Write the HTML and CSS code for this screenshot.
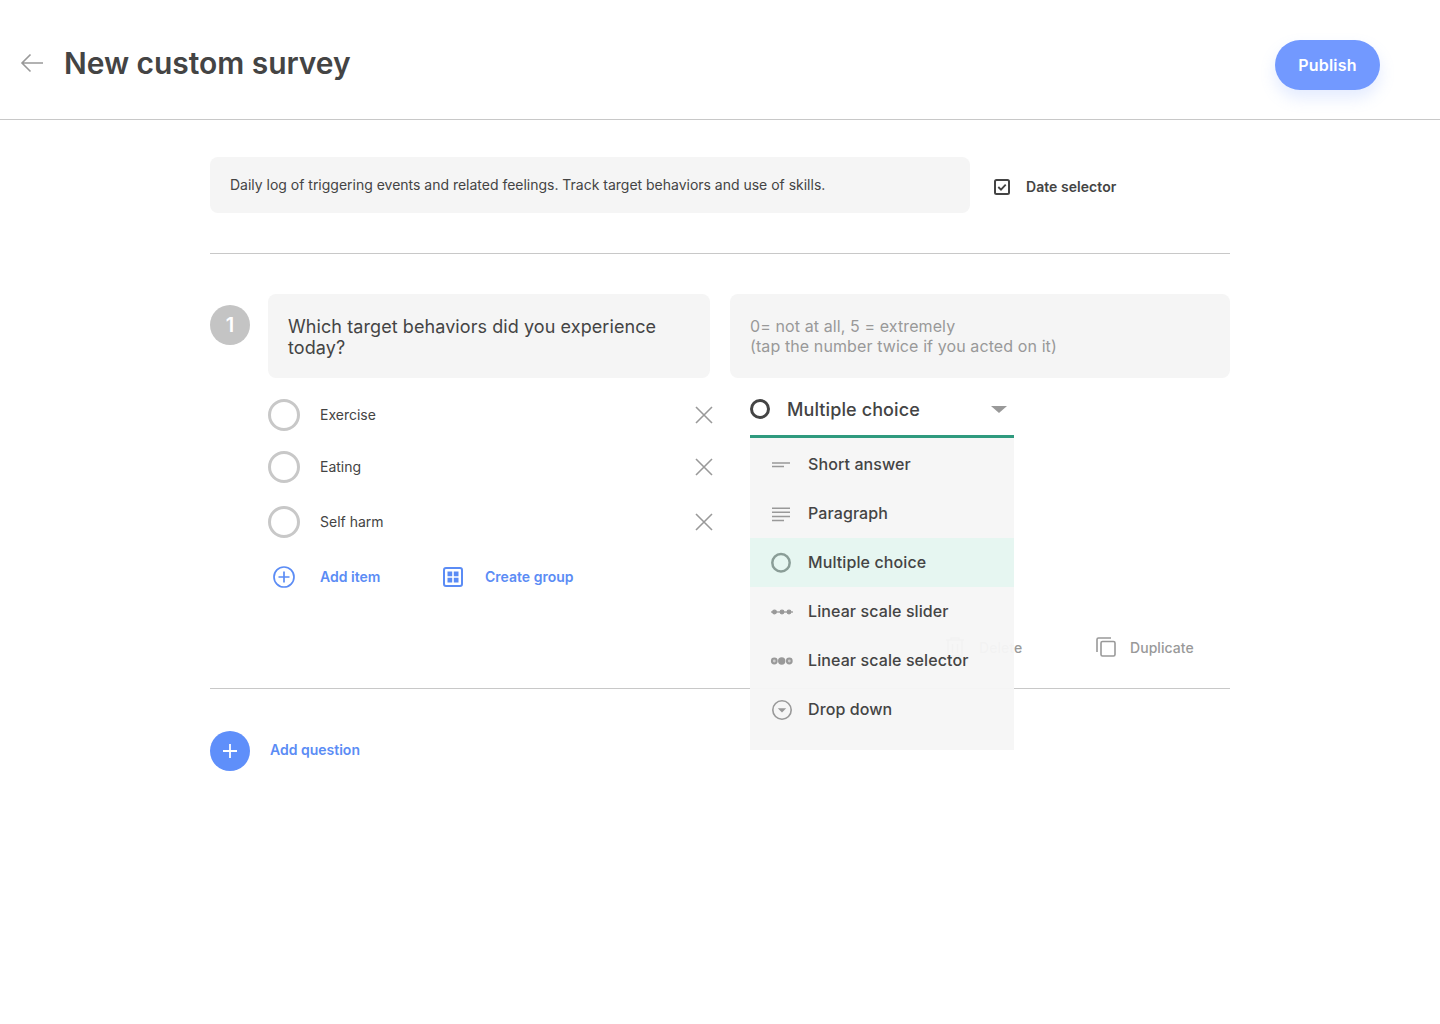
FILE: index.html
```html
<!DOCTYPE html>
<html lang="en">
<head>
<meta charset="utf-8">
<title>New custom survey</title>
<link rel="stylesheet" href="styles.css">
</head>
<body>
<header class="topbar">
  <div class="topbar-left">
    <svg class="back" width="24" height="20" viewBox="0 0 24 20" fill="none" stroke="#999" stroke-width="1.6"><path d="M23 10H2M10.500 1.500L2 10l8.500 8.500"/></svg>
    <h1 class="title">New custom survey</h1>
  </div>
  <button class="publish">Publish</button>
</header>
<main class="content">
  <section class="intro">
    <div class="intro-box">Daily log of triggering events and related feelings. Track target behaviors and use of skills.</div>
    <div class="date-select">
      <svg width="16" height="16" viewBox="0 0 16 16" fill="none" stroke="#444"><rect x="1" y="1" width="14" height="14" rx="1.500" stroke-width="2"/><path d="M4.300 8l2.700 2.700 4.700-5" stroke-width="1.800"/></svg>
      <span class="lift">Date selector</span>
    </div>
  </section>
  <section class="question">
    <div class="number">1</div>
    <div class="q-left">
      <div class="q-box">Which target behaviors did you experience today?</div>
      <ul class="options">
        <li class="option o1"><span class="radio"></span><span class="opt-label lift">Exercise</span><svg class="x" width="18" height="18" viewBox="0 0 18 18" stroke="#999" stroke-width="1.600"><path d="M1 1l16 16M17 1L1 17"/></svg></li>
        <li class="option o2"><span class="radio"></span><span class="opt-label lift">Eating</span><svg class="x" width="18" height="18" viewBox="0 0 18 18" stroke="#999" stroke-width="1.600"><path d="M1 1l16 16M17 1L1 17"/></svg></li>
        <li class="option o3"><span class="radio"></span><span class="opt-label lift">Self harm</span><svg class="x" width="18" height="18" viewBox="0 0 18 18" stroke="#999" stroke-width="1.600"><path d="M1 1l16 16M17 1L1 17"/></svg></li>
      </ul>
      <div class="add-row">
        <div class="link add-item">
          <svg width="24" height="24" viewBox="0 0 24 24" fill="none" stroke="#5b8cf5" stroke-width="1.700"><circle cx="12" cy="12" r="10"/><path d="M12 6.500v11M6.500 12h11"/></svg>
          <span class="lift">Add item</span>
        </div>
        <div class="link create-group">
          <svg width="20" height="20" viewBox="0 0 20 20"><rect x="1" y="1" width="18" height="18" rx="2" fill="none" stroke="#5b8cf5" stroke-width="2"/><path fill="#5b8cf5" d="M4.500 4.500h4.700v4.700H4.500zM10.800 4.500h4.700v4.700h-4.700zM4.500 10.800h4.700v4.700H4.500zM10.800 10.800h4.700v4.700h-4.700z"/></svg>
          <span class="lift">Create group</span>
        </div>
      </div>
    </div>
    <div class="q-right">
      <div class="hint-box">0= not at all, 5 = extremely<br>(tap the number twice if you acted on it)</div>
      <div class="select">
        <div class="select-head">
          <span class="head-radio"></span>
          <span class="head-label">Multiple choice</span>
          <span class="caret"></span>
        </div>
        <ul class="menu">
          <li class="menu-item">
            <svg width="22" height="20" viewBox="0 0 20 20" stroke="#999" stroke-width="1.500"><path d="M1 8h18M1 11.500h12"/></svg>
            <span class="lift">Short answer</span>
          </li>
          <li class="menu-item">
            <svg width="22" height="20" viewBox="0 0 20 20" stroke="#999" stroke-width="1.500"><path d="M1 4.200h18M1 8.200h18M1 12.400h18M1 16.400h12"/></svg>
            <span class="lift">Paragraph</span>
          </li>
          <li class="menu-item active">
            <svg width="22" height="20" viewBox="0 0 20 20" fill="none" stroke="#8a9d97" stroke-width="2.500"><circle cx="10" cy="9.700" r="8.700"/></svg>
            <span class="lift">Multiple choice</span>
          </li>
          <li class="menu-item">
            <svg width="22" height="20" viewBox="-1 0 22 20" fill="#999" stroke="#999" stroke-width="1.300"><path d="M0 10h22"/><circle cx="3.500" cy="10" r="1.800"/><circle cx="11" cy="10" r="1.800"/><circle cx="18" cy="10" r="1.800"/></svg>
            <span class="lift">Linear scale slider</span>
          </li>
          <li class="menu-item">
            <svg width="22" height="20" viewBox="-1 0 22 20" stroke="#999" stroke-width="2"><circle cx="3.300" cy="10" r="2.400" fill="#ccc"/><circle cx="10.700" cy="10" r="2.700" fill="#999"/><circle cx="18.300" cy="10" r="2.400" fill="#ccc"/></svg>
            <span class="lift">Linear scale selector</span>
          </li>
          <li class="menu-item">
            <svg width="22" height="20" viewBox="0 0 20 20" fill="none" stroke="#999" stroke-width="1.600"><circle cx="11" cy="10" r="9.200"/><path d="M6.800 8.300h8.400L11 12.500z" fill="#999" stroke="none"/></svg>
            <span class="lift">Drop down</span>
          </li>
        </ul>
      </div>
      <div class="actions">
        <div class="action delete">
          <svg width="20" height="20" viewBox="0 0 20 20" fill="none" stroke="#999" stroke-width="1.500"><path d="M1 3h18M6 3V1h8v2M3 3v16h14V3M7.500 7v9M12.500 7v9"/></svg>
          <span>Delete</span>
        </div>
        <div class="action duplicate">
          <svg width="20" height="20" viewBox="0 0 20 20" fill="none" stroke="#999" stroke-width="1.600"><rect x="5" y="4.500" width="14" height="14.500" rx="1.500"/><path d="M1 15V2.500A1.500 1.500 0 0 1 2.500 1H15"/></svg>
          <span>Duplicate</span>
        </div>
      </div>
    </div>
  </section>
  <section class="add-question">
    <span class="add-circle"><svg width="14" height="14" viewBox="0 0 14 14" stroke="#fff" stroke-width="1.800"><path d="M7 0v14M0 7h14"/></svg></span>
    <span class="add-q-label">Add question</span>
  </section>
</main>
</body>
</html>
```
FILE: styles.css
```css
* { box-sizing: border-box; }
html, body { margin: 0; padding: 0; }
body {
  min-height: 1024px;
  background: #fff;
  color: #444;
  font-family: Inter, "Liberation Sans", sans-serif;
}
ul { list-style: none; margin: 0; padding: 0; }
svg { display: block; flex: none; }
.lift { padding-bottom: 2px; }

.topbar {
  height: 120px;
  border-bottom: 1px solid #c8c8c8;
  padding: 40px 60px 29px 20px;
  display: flex;
  justify-content: space-between;
  align-items: flex-start;
}
.topbar-left { display: flex; align-items: center; height: 46px; }
.back { margin-right: 20px; }
.title { margin: 0; font-size: 30px; font-weight: 600; line-height: 46px; letter-spacing: -0.05px; color: #444; }
.publish {
  width: 105px;
  height: 50px;
  border: 0;
  border-radius: 25px;
  background: #7299ff;
  color: #fff;
  font: 600 16px/50px Inter, "Liberation Sans", sans-serif;
  letter-spacing: 0.2px;
  box-shadow: 0 8px 16px rgba(114, 153, 255, 0.2);
  padding: 0;
}

.content { width: 1020px; margin-left: 210px; }

.intro {
  padding-top: 37px;
  height: 134px;
  border-bottom: 1px solid #c8c8c8;
  display: flex;
  align-items: flex-start;
}
.intro-box {
  width: 760px;
  height: 56px;
  padding: 0 20px;
  border-radius: 8px;
  background: #f5f5f5;
  font-size: 14px;
  letter-spacing: -0.01px;
  line-height: 56px;
  color: #444;
}
.date-select {
  margin: 22px 0 0 24px;
  display: flex;
  align-items: center;
  gap: 16px;
  height: 16px;
  font-size: 14px;
  font-weight: 600;
  letter-spacing: 0.05px;
  color: #444;
}

.question {
  height: 435px;
  padding-top: 40px;
  border-bottom: 1px solid #c8c8c8;
  display: flex;
  align-items: flex-start;
}
.number {
  width: 40px;
  height: 40px;
  margin: 11px 18px 0 0;
  border-radius: 50%;
  background: #c4c4c4;
  color: #fff;
  text-align: center;
  font-size: 20px;
  font-weight: 600;
  line-height: 40px;
}
.q-left { width: 442px; margin-right: 20px; }
.q-box, .hint-box {
  height: 84px;
  padding: 22px 20px 0;
  border-radius: 8px;
  background: #f5f5f5;
}
.q-box { font-size: 18px; letter-spacing: 0.08px; line-height: 21px; color: #444; }
.hint-box { font-size: 16px; letter-spacing: 0.1px; line-height: 20px; color: #999; }

.options { padding-top: 21px; }
.option { display: flex; align-items: center; height: 32px; }
.o2 { margin-top: 20px; }
.o3 { margin-top: 23px; }
.radio {
  width: 32px;
  height: 32px;
  border: 3px solid #c8c8c8;
  border-radius: 50%;
  margin-right: 20px;
}
.opt-label { flex: 1; font-size: 14px; color: #444; }
.x { margin-right: -3px; }

.add-row { display: flex; align-items: center; margin-top: 23px; height: 32px; }
.link { display: flex; align-items: center; font-size: 14px; font-weight: 600; color: #5b8cf5; }
.add-item { width: 165px; padding-left: 4px; gap: 24px; }
.create-group { gap: 22px; margin-left: 10px; }

.q-right { width: 500px; position: relative; }
.select { position: relative; height: 60px; margin-left: 20px; width: 264px; }
.select-head {
  height: 60px;
  padding: 13px 7px 0 0;
  border-bottom: 3px solid #2f9a7e;
  display: flex;
  align-items: flex-start;
}
.head-radio {
  width: 20px;
  height: 20px;
  border: 3px solid #444;
  border-radius: 50%;
  margin: 8px 17px 0 0;
}
.head-label { flex: 1; font-size: 18px; font-weight: 500; line-height: 38px; letter-spacing: 0.1px; color: #444; }
.caret {
  width: 0;
  height: 0;
  margin-top: 15px;
  border-left: 8px solid transparent;
  border-right: 8px solid transparent;
  border-top: 7px solid #999;
}
.menu {
  position: absolute;
  left: 0;
  top: 60px;
  width: 264px;
  height: 312px;
  padding-top: 2px;
  background: rgba(246, 246, 246, 0.96);
  z-index: 2;
}
.menu-item {
  display: flex;
  align-items: center;
  height: 49px;
  padding-left: 20px;
  font-size: 16px;
  font-weight: 500;
  letter-spacing: 0.1px;
  color: #444;
  gap: 16px;
}
.menu-item svg { overflow: visible; }
.menu-item.active { background: #e6f6f1; }

.actions { display: flex; position: relative; margin-top: 199px; height: 20px; font-size: 14px; font-weight: 500; letter-spacing: 0.05px; color: #999; }
.action { display: flex; align-items: center; gap: 14px; }
.delete { margin-left: 215px; width: 151px; }

.add-question { display: flex; align-items: center; height: 40px; margin-top: 42px; gap: 20px; }
.add-circle {
  width: 40px;
  height: 40px;
  border-radius: 50%;
  background: #5f8ffa;
  display: flex;
  align-items: center;
  justify-content: center;
}
.add-q-label { font-size: 14px; font-weight: 600; padding-bottom: 4px; color: #5b8cf5; }
```
